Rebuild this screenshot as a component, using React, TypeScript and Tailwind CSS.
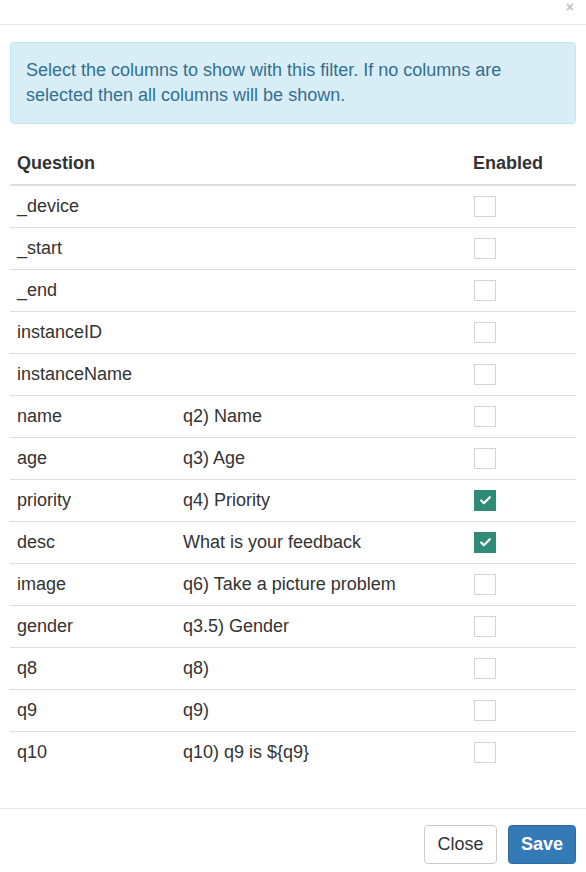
import { Check } from 'lucide-react'

type Row = { name: string; label: string; enabled: boolean }

const rows: Row[] = [
  { name: '_device', label: '', enabled: false },
  { name: '_start', label: '', enabled: false },
  { name: '_end', label: '', enabled: false },
  { name: 'instanceID', label: '', enabled: false },
  { name: 'instanceName', label: '', enabled: false },
  { name: 'name', label: 'q2) Name', enabled: false },
  { name: 'age', label: 'q3) Age', enabled: false },
  { name: 'priority', label: 'q4) Priority', enabled: true },
  { name: 'desc', label: 'What is your feedback', enabled: true },
  { name: 'image', label: 'q6) Take a picture problem', enabled: false },
  { name: 'gender', label: 'q3.5) Gender', enabled: false },
  { name: 'q8', label: 'q8)', enabled: false },
  { name: 'q9', label: 'q9)', enabled: false },
  { name: 'q10', label: 'q10) q9 is ${q9}', enabled: false },
]

function Checkbox({ checked }: { checked: boolean }) {
  if (checked) {
    return (
      <span className="flex h-[21px] w-[22px] items-center justify-center bg-[#2f8a76]">
        <Check className="h-[13px] w-[13px] text-white" strokeWidth={4} />
      </span>
    )
  }
  return <span className="block h-[21px] w-[22px] border border-[#d4d4d4] bg-white" />
}

export default function App() {
  return (
    <div className="min-h-[872px] w-[586px] bg-white font-['Liberation_Sans',Arial,sans-serif] text-[18px] leading-[25px] text-[#333]">
      {/* header */}
      <div className="flex h-[25px] justify-end border-b border-[#e5e5e5]">
        <span className="mr-[12px] text-[14px] font-bold leading-[14px] text-[#c4c4c4]">×</span>
      </div>

      {/* body */}
      <div className="px-[10px] pb-[15px] pt-[17px]">
        <div className="rounded-[4px] border border-[#bce8f1] bg-[#d9edf7] px-[15px] py-[15px] text-[#31708f]">
          Select the columns to show with this filter. If no columns are selected then all columns will be shown.
        </div>

        <div className="mb-[20px] mt-[19px]">
          <div className="grid grid-cols-[165px_290px_1fr] border-b-2 border-[#ddd] font-bold">
            <div className="p-[8px] pl-[7px]">Question</div>
            <div className="p-[8px]" />
            <div className="p-[8px]">Enabled</div>
          </div>
          {rows.map((r, i) => (
            <div
              key={r.name}
              className={[
                'grid grid-cols-[165px_290px_1fr]',
                i > 0 ? 'border-t border-[#ddd]' : '',
              ].join(' ')}
            >
              <div className="p-[8px] pl-[7px]">{r.name}</div>
              <div className="p-[8px]">{r.label}</div>
              <div className="flex h-[41px] items-center p-[8px] pl-[9px]">
                <Checkbox checked={r.enabled} />
              </div>
            </div>
          ))}
        </div>
      </div>

      {/* footer */}
      <div className="flex justify-end gap-[11px] border-t border-[#e5e5e5] px-[10px] pt-[16px]">
        <button className="h-[39px] w-[73px] rounded-[4px] border border-[#ccc] bg-white text-[#333]">Close</button>
        <button className="h-[39px] w-[68px] rounded-[4px] border border-[#2e6da4] bg-[#337ab7] font-bold text-white">
          Save
        </button>
      </div>
    </div>
  )
}
